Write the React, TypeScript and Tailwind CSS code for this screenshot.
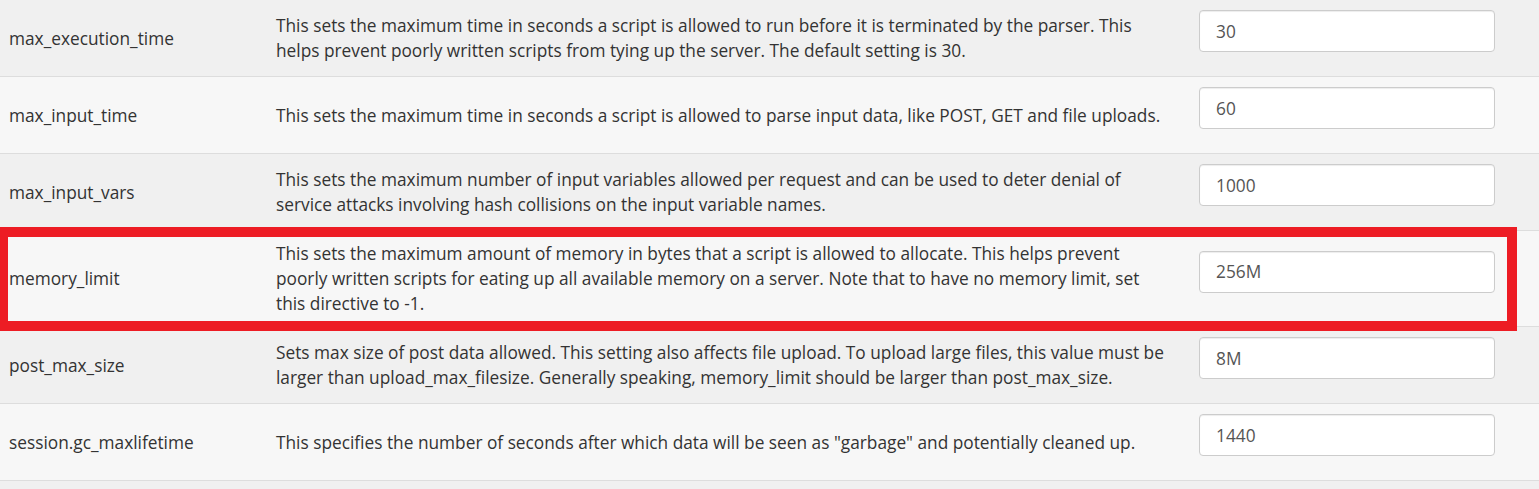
import React from "react";

type Row = { name: string; desc: string[]; value: string; highlight?: boolean };

const rows: Row[] = [
  {
    name: "max_execution_time",
    desc: [
      "This sets the maximum time in seconds a script is allowed to run before it is terminated by the parser. This",
      "helps prevent poorly written scripts from tying up the server. The default setting is 30.",
    ],
    value: "30",
  },
  {
    name: "max_input_time",
    desc: [
      "This sets the maximum time in seconds a script is allowed to parse input data, like POST, GET and file uploads.",
    ],
    value: "60",
  },
  {
    name: "max_input_vars",
    desc: [
      "This sets the maximum number of input variables allowed per request and can be used to deter denial of",
      "service attacks involving hash collisions on the input variable names.",
    ],
    value: "1000",
  },
  {
    name: "memory_limit",
    desc: [
      "This sets the maximum amount of memory in bytes that a script is allowed to allocate. This helps prevent",
      "poorly written scripts for eating up all available memory on a server. Note that to have no memory limit, set",
      "this directive to -1.",
    ],
    value: "256M",
    highlight: true,
  },
  {
    name: "post_max_size",
    desc: [
      "Sets max size of post data allowed. This setting also affects file upload. To upload large files, this value must be",
      "larger than upload_max_filesize. Generally speaking, memory_limit should be larger than post_max_size.",
    ],
    value: "8M",
  },
  {
    name: "session.gc_maxlifetime",
    desc: [
      'This specifies the number of seconds after which data will be seen as "garbage" and potentially cleaned up.',
    ],
    value: "1440",
  },
];

export default function App() {
  return (
    <div
      className="w-[1539px] h-[489px] overflow-hidden bg-[#f0f0f0] text-[#333] text-[17.3px] leading-[25px]"
      style={{ fontFamily: '"Open Sans", "Noto Sans", sans-serif' }}
    >
      {rows.map((r, i) => (
        <div
          key={r.name}
          className={`relative flex items-center min-h-[77px] py-[10px] border-b border-[#dddddd] ${
            i % 2 === 0 ? "bg-[#f0f0f0]" : "bg-[#f7f7f7]"
          }`}
        >
          <div className="w-[267px] shrink-0 pl-[9px]">{r.name}</div>
          <div className="w-[923px] shrink-0 px-[9px]">
            {r.desc.map((line) => (
              <div key={line} className="whitespace-nowrap">
                {line}
              </div>
            ))}
          </div>
          <div className="shrink-0 pl-[9px] pb-[14px]">
            <div className="w-[296px] h-[42px] flex items-center rounded-[4px] border border-[#cccccc] bg-white pl-[16px] text-[#555] shadow-[inset_0_1px_1px_rgba(0,0,0,0.075)]">
              {r.value}
            </div>
          </div>
          {r.highlight && (
            <div className="absolute z-10 top-[-4px] bottom-[-5px] left-[-2px] right-[22px] border-[10px] border-[#ed1c24] pointer-events-none" />
          )}
        </div>
      ))}
      <div className="h-[10px] bg-[#f0f0f0]" />
    </div>
  );
}
